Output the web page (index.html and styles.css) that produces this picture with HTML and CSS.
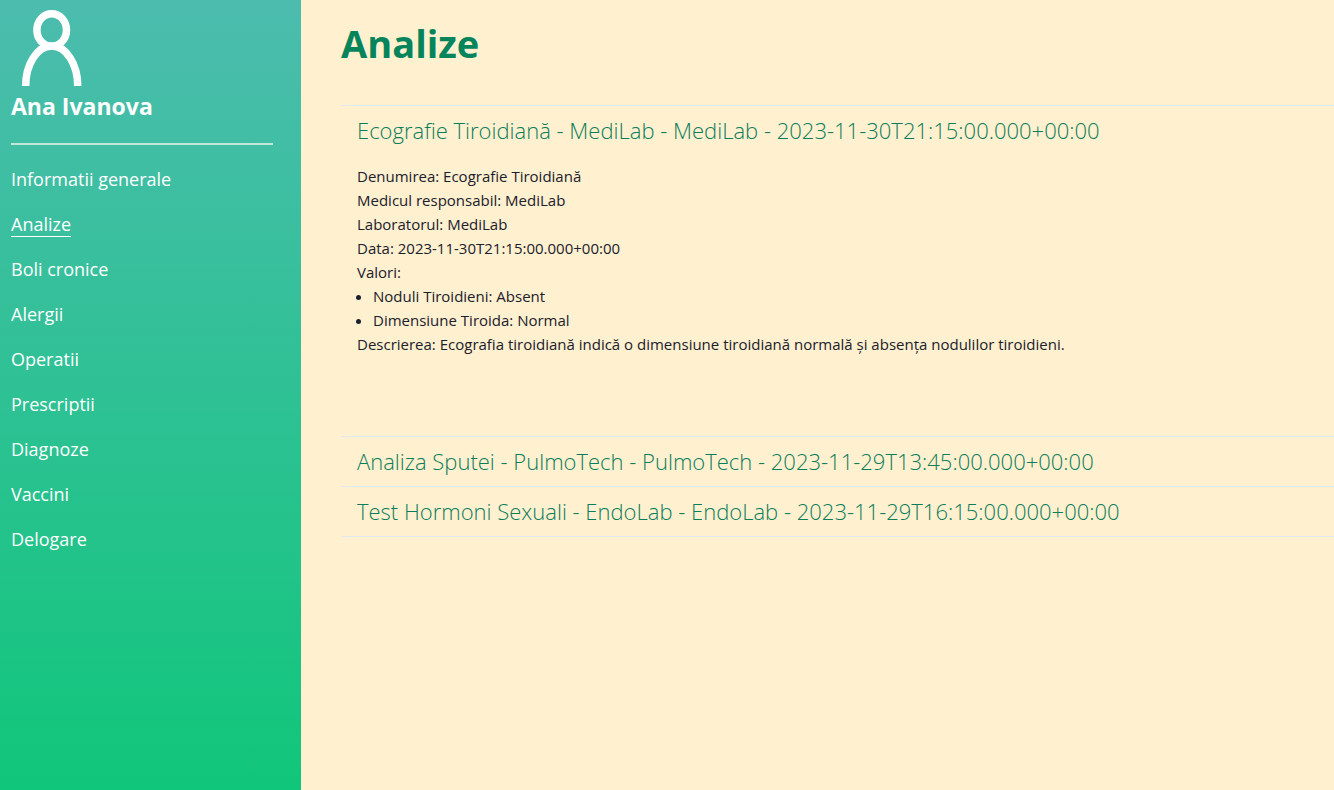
FILE: index.html
```html
<!DOCTYPE html>
<html lang="ro">
<head>
<meta charset="utf-8">
<title>Analize</title>
<link rel="stylesheet" href="styles.css">
</head>
<body>
<div class="layout">
  <aside class="sidebar">
    <svg class="avatar" viewBox="0 0 80 80" aria-hidden="true">
      <ellipse cx="40.7" cy="22" rx="14.8" ry="16.2"/>
      <path d="M14.7 78A26 40 0 0 1 66.7 78"/>
    </svg>
    <h2 class="user-name">Ana Ivanova</h2>
    <nav class="nav">
      <a href="#">Informatii generale</a>
      <a href="#" class="active" aria-current="page">Analize</a>
      <a href="#">Boli cronice</a>
      <a href="#">Alergii</a>
      <a href="#">Operatii</a>
      <a href="#">Prescriptii</a>
      <a href="#">Diagnoze</a>
      <a href="#">Vaccini</a>
      <a href="#">Delogare</a>
    </nav>
  </aside>
  <main class="content">
    <h1 class="title">Analize</h1>
    <div class="accordion">
      <section class="item">
        <button class="item-header" type="button" aria-expanded="true">Ecografie Tiroidiană - MediLab - MediLab - 2023-11-30T21:15:00.000+00:00</button>
        <div class="item-body">
          <div>Denumirea: Ecografie Tiroidiană</div>
          <div>Medicul responsabil: MediLab</div>
          <div>Laboratorul: MediLab</div>
          <div>Data: 2023-11-30T21:15:00.000+00:00</div>
          <div>Valori:</div>
          <ul class="values">
            <li>Noduli Tiroidieni: Absent</li>
            <li>Dimensiune Tiroida: Normal</li>
          </ul>
          <div>Descrierea: Ecografia tiroidiană indică o dimensiune tiroidiană normală și absența nodulilor tiroidieni.</div>
        </div>
      </section>
      <section class="item">
        <button class="item-header" type="button" aria-expanded="false">Analiza Sputei - PulmoTech - PulmoTech - 2023-11-29T13:45:00.000+00:00</button>
      </section>
      <section class="item">
        <button class="item-header" type="button" aria-expanded="false">Test Hormoni Sexuali - EndoLab - EndoLab - 2023-11-29T16:15:00.000+00:00</button>
      </section>
    </div>
  </main>
</div>
</body>
</html>
```
FILE: styles.css
```css
* { box-sizing: border-box; }
body {
  margin: 0;
  font-family: "Segoe UI", "Open Sans", "Noto Sans", sans-serif;
  font-size: 15px;
  line-height: 24px;
  color: #1a202c;
  background: #fff0cf;
}
.layout { display: flex; min-height: 100vh; }
.sidebar {
  flex: 0 0 301px;
  padding: 8px 28px 0 11px;
  color: #fff;
  background: linear-gradient(#4cbcae, #10c67a);
}
.avatar {
  display: block;
  width: 80px;
  height: 80px;
  fill: none;
  stroke: #fff;
  stroke-width: 7.5;
}
.user-name {
  margin: 0;
  padding: 2px 0 20px;
  font-size: 23px;
  line-height: 33px;
  font-weight: 700;
  border-bottom: 2px solid #c0e8da;
}
.nav {
  display: flex;
  flex-direction: column;
  align-items: flex-start;
  gap: 21px;
  padding-top: 23px;
}
.nav a {
  color: #fff;
  font-size: 18px;
  line-height: 23px;
  text-decoration: none;
  border-bottom: 1px solid transparent;
}
.nav .active { border-bottom-color: #fff; }
.content { flex: 1; min-width: 0; padding: 13px 0 0 40px; }
.title {
  margin: 0 0 32px;
  font-size: 38px;
  line-height: 60px;
  font-weight: 700;
  color: #06845b;
}
.item { border-top: 1px solid #e2e8f0; }
.item:last-child { border-bottom: 1px solid #e2e8f0; }
.item-header {
  display: block;
  width: 100%;
  padding: 8px 16px;
  border: 0;
  background: none;
  color: #0b7d5a;
  font: inherit;
  font-size: 22px;
  font-weight: 300;
  line-height: 33px;
  text-align: left;
  cursor: pointer;
}
.item-body { padding: 9px 16px 80px; }
.values { margin: 0; padding-left: 16px; }
```
